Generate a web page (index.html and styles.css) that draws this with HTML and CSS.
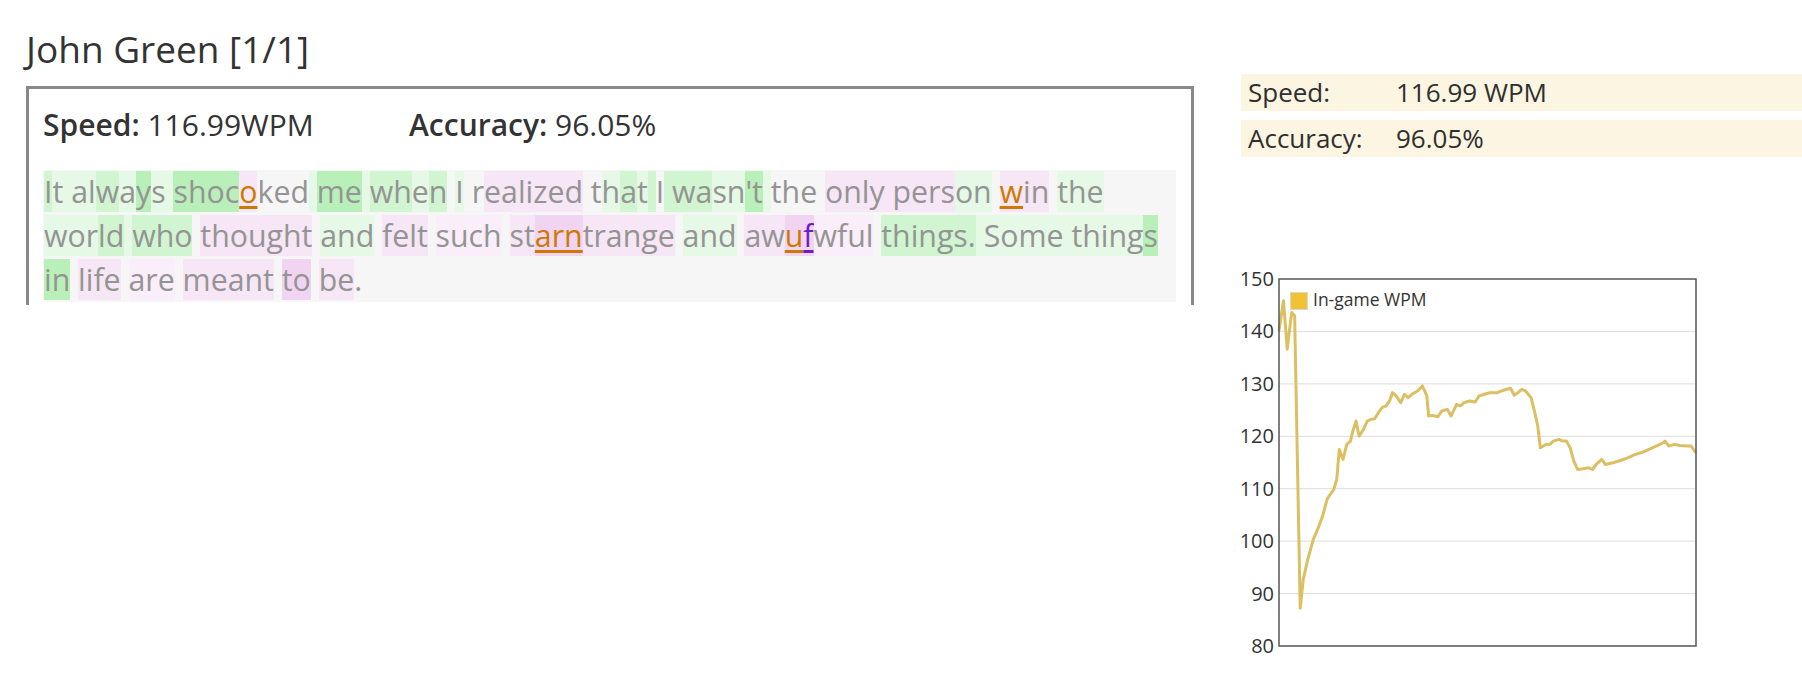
FILE: index.html
```html
<!DOCTYPE html>
<html>
<head>
<meta charset="utf-8">
<link rel="stylesheet" href="styles.css">
</head>
<body>
<div class="page">
  <div class="main">
    <h1 class="title">John Green [1/1]</h1>
    <div class="box">
      <div class="stats">
        <div class="stat stat-speed"><b>Speed:</b> 116.99WPM</div>
        <div class="stat"><b>Accuracy:</b> 96.05%</div>
      </div>
      <div class="panel"><span class="b">I</span><span class="c">t a</span><span class="c">l</span><span class="b">w</span><span class="c">a</span><span class="a">y</span><span class="c">s </span><span class="a">shoc</span><span class="err-o p">o</span><span>ked</span><span class="c"> </span><span class="a">me</span><span class="c"> </span><span class="b">wh</span><span class="c">e</span><span class="b">n</span> <span class="c">I</span> r<span class="p">ealized</span> t<span class="c">h</span><span class="b">a</span><span class="c">t</span><span class="b"> </span>I<span class="b"> wa</span><span class="c">sn</span><span class="a">'t</span><span class="c"> </span>the <span class="p">only pers</span><span class="c">on</span> <span class="p"><span class="err-o">w</span>in</span> <span class="c">the</span><br><span class="c">wor</span><span class="b">ld</span><span class="c"> </span><span class="b">who</span> <span class="p">thought</span> <span class="c">and</span> <span class="p">felt</span> <span class="p2">such</span> <span class="p">st</span><span class="q err-o">arn</span><span class="p">trange</span> <span class="c">and</span> <span class="p">aw</span><span class="q err-o">u</span><span class="q err-v">f</span><span class="p2">wful</span> <span class="b">things.</span><span class="c"> Some </span><span class="c">thing</span><span class="a">s</span><br><span class="a">in</span> <span class="p">life</span> <span class="p2">are</span> <span class="p">meant</span> <span class="q">to</span> <span class="p">be</span>.</div>
    </div>
  </div>
  <div class="side">
    <div class="summary">
      <div class="row"><span class="label">Speed:</span><span class="value">116.99 WPM</span></div>
      <div class="row"><span class="label">Accuracy:</span><span class="value">96.05%</span></div>
    </div>
    <svg class="chart" width="470" height="400" viewBox="0 0 470 400">
      <g class="grid">
        <line x1="38" x2="455" y1="66.4" y2="66.4"/>
        <line x1="38" x2="455" y1="118.9" y2="118.9"/>
        <line x1="38" x2="455" y1="171.3" y2="171.3"/>
        <line x1="38" x2="455" y1="223.7" y2="223.7"/>
        <line x1="38" x2="455" y1="276.1" y2="276.1"/>
        <line x1="38" x2="455" y1="328.6" y2="328.6"/>
      </g>
      <g class="ylabels">
        <text x="33" y="21">150</text>
        <text x="33" y="73.4">140</text>
        <text x="33" y="125.9">130</text>
        <text x="33" y="178.3">120</text>
        <text x="33" y="230.7">110</text>
        <text x="33" y="283.1">100</text>
        <text x="33" y="335.6">90</text>
        <text x="33" y="388">80</text>
      </g>
      <g transform="translate(38,14) scale(0.3723,0.3342) translate(-163,-60)">
        <polyline class="series" points="163,215 175,125 185,270 197,160 205,170 220,1045 228,960 240,900 255,840 270,800 280,770 292,720 300,705 310,690 318,660 325,570 335,600 345,555 355,545 360,520 370,485 378,530 390,510 400,485 410,480 420,478 430,460 440,445 450,440 460,425 468,400 478,410 490,430 500,405 510,415 520,405 535,395 548,380 560,410 565,470 575,468 590,472 600,455 615,450 625,470 640,435 650,440 660,430 675,425 690,428 700,410 715,405 730,400 750,400 760,395 775,390 785,387 795,408 805,400 815,390 825,395 840,415 850,460 858,500 865,565 880,555 890,555 900,545 915,540 925,545 935,545 945,565 955,605 965,630 980,628 995,625 1005,630 1015,615 1030,600 1040,615 1060,610 1080,603 1100,595 1120,585 1140,578 1160,568 1180,558 1195,550 1200,545 1210,560 1225,555 1240,558 1260,560 1270,560 1283,580"/>
      </g>
      <rect class="frame" x="38" y="14" width="417" height="367"/>
      <rect class="legend-swatch" x="49.5" y="27.5" width="17" height="17"/>
      <text class="legend-text" x="72" y="41">In-game WPM</text>
    </svg>
  </div>
</div>
</body>
</html>
```

FILE: styles.css
```css
body {
  margin: 0;
  background: #ffffff;
  font-family: "Open Sans", "Noto Sans", sans-serif;
  color: #333333;
}

.page {
  display: flex;
  align-items: flex-start;
}

.main {
  margin-left: 26px;
  width: 1168px;
  flex: none;
}

.title {
  font-size: 37px;
  font-weight: 400;
  line-height: 49px;
  margin: 24px 0 13px 0;
  color: #333333;
}

.box {
  border: 3px solid #888888;
  border-bottom: none;
  padding: 16px 15px 3px 14px;
}

.stats {
  display: flex;
  font-size: 30px;
  line-height: 40px;
  color: #333333;
  margin-bottom: 25px;
}

.stat b {
  font-weight: 600;
}

.stat-speed {
  width: 366px;
}

.panel {
  background: #f6f6f6;
  color: #949494;
  font-size: 30.3px;
  line-height: 44px;
  white-space: nowrap;
  padding-left: 1px;
}

.a { background: #b9f0b9; }
.b { background: #d0f5d0; }
.c { background: #e6f8e6; }
.p { background: #f6e6f6; }
.p2 { background: #f9eef9; }
.q { background: #f1d4f1; }

.err-o {
  color: #cc7a00;
  text-decoration: underline;
  text-decoration-thickness: 3px;
  text-underline-offset: 3px;
}

.err-v {
  color: #6a1fc4;
  text-decoration: underline;
  text-decoration-thickness: 3px;
  text-underline-offset: 3px;
}

.side {
  flex: 1;
  margin-left: 47px;
  padding-top: 74px;
  min-width: 0;
}

.summary {
  display: flex;
  flex-direction: column;
  gap: 9px;
}

.row {
  display: flex;
  background: #fbf5e1;
  height: 37px;
  line-height: 37px;
  font-size: 26px;
  color: #2f2f2f;
  padding-left: 7px;
}

.label {
  width: 148px;
  font-weight: 500;
}

.chart {
  display: block;
  margin-top: 108px;
  font-family: "Open Sans", "Noto Sans", sans-serif;
}

.grid line {
  stroke: #dcdcdc;
  stroke-width: 1;
}

.ylabels text {
  font-size: 20px;
  fill: #333333;
  text-anchor: end;
}

.series {
  fill: none;
  stroke: #dcbf62;
  stroke-width: 3;
  stroke-linejoin: round;
  vector-effect: non-scaling-stroke;
}

.frame {
  fill: none;
  stroke: #555555;
  stroke-width: 1.5;
}

.legend-swatch {
  fill: #f1c232;
  stroke: #d8d8d8;
  stroke-width: 1;
}

.legend-text {
  font-size: 17.5px;
  fill: #333333;
}
```
